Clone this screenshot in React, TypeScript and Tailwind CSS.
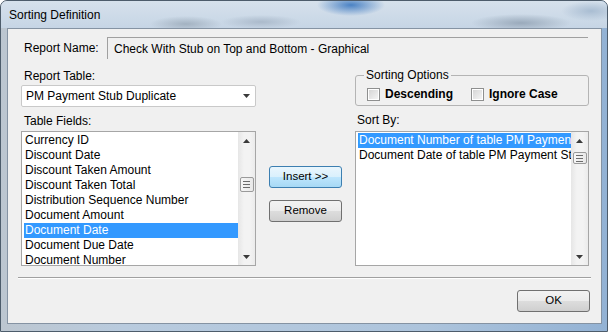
import React from 'react';

const tableFields = [
  'Currency ID',
  'Discount Date',
  'Discount Taken Amount',
  'Discount Taken Total',
  'Distribution Sequence Number',
  'Document Amount',
  'Document Date',
  'Document Due Date',
  'Document Number',
];

const sortBy = [
  'Document Number of table PM Payment Stub Duplicate',
  'Document Date of table PM Payment Stub Duplicate',
];

const Arrow = ({ dir }: { dir: 'up' | 'down' }) => (
  <svg width="7" height="4" viewBox="0 0 7 4">
    <path d={dir === 'up' ? 'M3.5 0L7 4H0Z' : 'M0 0H7L3.5 4Z'} fill="#3a3a3a" />
  </svg>
);

// vertical win7 scrollbar, thumb placed by a margin class
const ScrollBar = ({ thumb }: { thumb: string }) => (
  <div className="flex w-[17px] shrink-0 flex-col bg-[linear-gradient(90deg,#e6e6e6,#f3f3f3_35%,#f3f3f3_70%,#ebebeb)]">
    <div className="flex h-[17px] items-center justify-center">
      <Arrow dir="up" />
    </div>
    <div className="flex-1">
      <div
        className={`mx-auto flex w-[14px] flex-col items-center justify-center gap-[2px] rounded-[2px] border border-[#9a9a9a] bg-[linear-gradient(90deg,#f6f6f6,#e8e8e8)] ${thumb}`}
      >
        <span className="h-px w-[7px] bg-[#6c6c6c]" />
        <span className="h-px w-[7px] bg-[#6c6c6c]" />
        <span className="h-px w-[7px] bg-[#6c6c6c]" />
      </div>
    </div>
    <div className="flex h-[17px] items-center justify-center">
      <Arrow dir="down" />
    </div>
  </div>
);

const ListBox = ({ items, selected, thumb }: { items: string[]; selected: number; thumb: string }) => (
  <div className="flex h-[135px] border border-[#a6a6a6] bg-white">
    <div className="min-w-0 flex-1 overflow-hidden pl-[2px] pt-[1px]">
      {items.map((it, i) => (
        <div
          key={i}
          className={
            'h-[15px] overflow-hidden whitespace-nowrap px-[1px] leading-[15px] ' +
            (i === selected ? 'bg-[#3399ff] text-white' : 'text-black')
          }
        >
          {it}
        </div>
      ))}
    </div>
    <ScrollBar thumb={thumb} />
  </div>
);

const CheckBox = ({ label }: { label: string }) => (
  <div className="flex items-center">
    <span className="h-[13px] w-[13px] border border-[#8e8f8f] bg-white p-px">
      <span className="block h-full w-full bg-[linear-gradient(135deg,#d6d6d6,#f4f4f4)]" />
    </span>
    <span className="ml-[5px] font-bold">{label}</span>
  </div>
);

const Button = ({ label, focused }: { label: string; focused?: boolean }) => (
  <button
    className={
      'h-[22px] w-[73px] rounded-[3px] border text-[11.5px] text-black ' +
      (focused
        ? 'border-[#3c7fb1] bg-[linear-gradient(180deg,#eaf6fd,#d9f0fc_50%,#bee6fd_50%,#a7d9f5)]'
        : 'border-[#707070] bg-[linear-gradient(180deg,#f2f2f2,#ebebeb_50%,#dddddd_50%,#cfcfcf)]')
    }
  >
    {label}
  </button>
);

export default function App() {
  return (
    <div className="flex h-[332px] w-[608px] flex-col overflow-hidden rounded-t-[7px] border border-[#4d5c6b] bg-[linear-gradient(90deg,#bcc6d0,#b9cbde_20%,#adc4dc_70%,#93b2d4)] font-['Liberation_Sans',Arial,sans-serif] text-[12px] text-black">
      {/* title bar */}
      <div className="flex h-[27px] shrink-0 items-center bg-[radial-gradient(ellipse_34px_11px_at_350px_4px,#4a82c4,transparent),radial-gradient(ellipse_50px_9px_at_520px_22px,#9aaabb,transparent),radial-gradient(ellipse_36px_8px_at_185px_23px,#a3b2c1,transparent),radial-gradient(ellipse_40px_7px_at_260px_21px,#abbacb,transparent),radial-gradient(ellipse_30px_10px_at_590px_10px,#a9bdd2,transparent),linear-gradient(180deg,#d6e1ec,#c6d5e5)] pl-[8px]">
        <span className="text-[12px] leading-none">Sorting Definition</span>
      </div>

      {/* client area */}
      <div className="ml-[6px] flex h-[296px] w-[595px] flex-col border border-[#8593a3] bg-[#f0f0f0]">
        <div className="mt-[8px] flex items-center pl-[16px]">
          <span className="w-[83px]">Report Name:</span>
          <div className="flex h-[22px] w-[481px] items-center border-t border-l border-[#a0a0a0] pl-[6px]">
            Check With Stub on Top and Bottom - Graphical
          </div>
        </div>

        <div className="flex pl-[13px]">
          {/* left column */}
          <div className="flex w-[235px] flex-col">
            <div className="mt-[10px] pl-[3px] leading-[15px]">Report Table:</div>
            <div className="mt-[1px] flex h-[22px] items-center justify-between rounded-[2px] border border-[#c9c9c9] bg-white pl-[4px] pr-[5px]">
              <span>PM Payment Stub Duplicate</span>
              <Arrow dir="down" />
            </div>
            <div className="mt-[7px] pl-[3px] leading-[15px]">Table Fields:</div>
            <div className="mt-[2px]">
              <ListBox items={tableFields} selected={6} thumb="mt-[28px] h-[15px]" />
            </div>
          </div>

          {/* buttons */}
          <div className="ml-[13px] flex flex-col gap-[12px] pt-[107px]">
            <Button label="Insert >>" focused />
            <Button label="Remove" />
          </div>

          {/* right column */}
          <div className="ml-[13px] flex w-[234px] flex-col">
            <fieldset className="mt-[9px] rounded-[3px] border border-[#b4b4b4] pb-[4px] pl-[11px]">
              <legend className="-ml-[3px] px-[2px] leading-[15px]">Sorting Options</legend>
              <div className="mt-[4px] flex h-[14px] items-center">
                <div className="w-[104px]">
                  <CheckBox label="Descending" />
                </div>
                <CheckBox label="Ignore Case" />
              </div>
            </fieldset>
            <div className="mt-[7px] pl-[2px] leading-[15px]">Sort By:</div>
            <div className="mt-[3px]">
              <ListBox items={sortBy} selected={0} thumb="mt-[3px] h-[12px]" />
            </div>
          </div>
        </div>

        <div className="mx-[10px] mt-[11px] h-[2px] border-t border-b border-t-[#a0a0a0] border-b-white" />

        <div className="mt-[11px] flex justify-end pr-[11px]">
          <Button label="OK" />
        </div>
      </div>
    </div>
  );
}
